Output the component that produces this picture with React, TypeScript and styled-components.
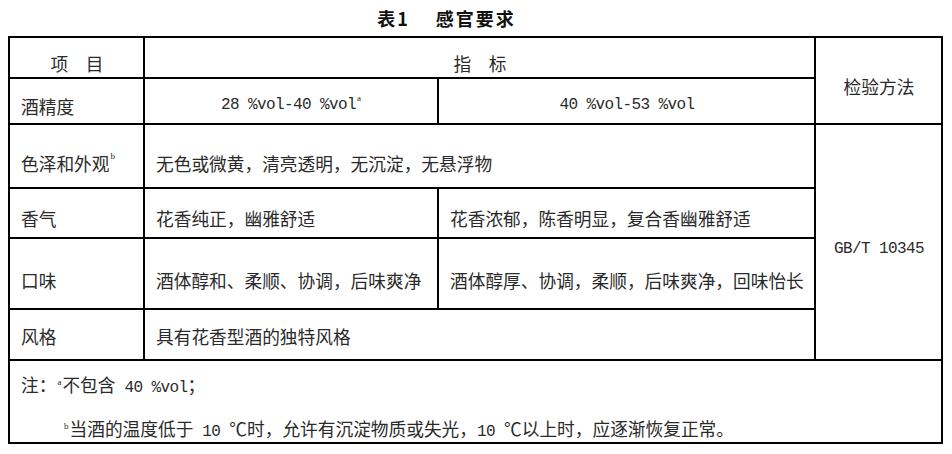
import React from "react";
import styled, { createGlobalStyle } from "styled-components";

const GlobalStyle = createGlobalStyle`
  html, body {
    margin: 0;
    padding: 0;
    background: #ffffff;
  }
  body {
    font-family: "Noto Sans CJK SC", sans-serif;
    color: #2a2a2a;
  }
`;

const Page = styled.div`
  width: 952px;
  padding: 0 8px;
  box-sizing: border-box;
`;

const Title = styled.h1`
  display: flex;
  justify-content: center;
  gap: 26px;
  height: 36px;
  margin: 0;
  padding-right: 59px;
  line-height: 36px;
  font-size: 18px;
  font-weight: 700;
  letter-spacing: 2px;
  color: #111;
`;

// grid lines are drawn by the black background showing through the gaps
const Grid = styled.div`
  display: grid;
  width: 935px;
  box-sizing: border-box;
  padding: 2px;
  gap: 2px;
  background: #000;
  grid-template-columns: 133px 292px 375px 125px;
  grid-template-rows: 39px 44px 62px 48px 69px 49px 81px;
`;

const Cell = styled.div<{ $col?: string; $row?: string; $center?: boolean; $shift?: number }>`
  display: flex;
  align-items: center;
  justify-content: ${({ $center }) => ($center ? "center" : "flex-start")};
  grid-column: ${({ $col }) => $col || "auto"};
  grid-row: ${({ $row }) => $row || "auto"};
  background: #fff;
  box-sizing: border-box;
  padding: ${({ $shift = 10 }) => $shift}px 10px 0 11px;
  font-size: 17.7px;
  white-space: nowrap;
`;

const Note = styled.div`
  grid-column: 1 / 5;
  background: #fff;
  overflow: hidden;
  padding: 1px 11px 0;
  font-size: 17.7px;
  line-height: 44px;
  white-space: nowrap;
`;

const NoteLine = styled.div<{ $indent?: boolean }>`
  height: 44px;
  padding-left: ${({ $indent }) => ($indent ? "42px" : "0")};
`;

const L = styled.span`
  font-family: "Liberation Mono", monospace;
  font-size: 16px;
  letter-spacing: -0.6px;
  line-height: 1;
  white-space: pre;
`;

const Sup = styled.span`
  font-family: "Liberation Serif", serif;
  font-size: 9px;
  line-height: 1;
  position: relative;
  top: -7px;
  margin: 0 1px;
`;

export default function App() {
  return (
    <Page>
      <GlobalStyle />
      <Title>
        <span>表1</span>
        <span>感官要求</span>
      </Title>
      <Grid>
        <Cell $center>项　目</Cell>
        <Cell $col="2 / 4" $center>指　标</Cell>
        <Cell $col="4" $row="1 / 3" $center $shift={11}>检验方法</Cell>

        <Cell>酒精度</Cell>
        <Cell $center $shift={8}>
          <L>28 %vol-40 %vol</L>
          <Sup>a</Sup>
        </Cell>
        <Cell $center $shift={8}>
          <L>40 %vol-53 %vol</L>
        </Cell>

        <Cell $shift={14}>
          色泽和外观<Sup>b</Sup>
        </Cell>
        <Cell $col="2 / 4" $shift={14}>无色或微黄，清亮透明，无沉淀，无悬浮物</Cell>
        <Cell $col="4" $row="3 / 7" $center $shift={14}>
          <L>GB/T 10345</L>
        </Cell>

        <Cell>香气</Cell>
        <Cell>花香纯正，幽雅舒适</Cell>
        <Cell>花香浓郁，陈香明显，复合香幽雅舒适</Cell>

        <Cell $shift={12}>口味</Cell>
        <Cell $shift={12}>酒体醇和、柔顺、协调，后味爽净</Cell>
        <Cell $shift={12}>酒体醇厚、协调，柔顺，后味爽净，回味怡长</Cell>

        <Cell $shift={2}>风格</Cell>
        <Cell $col="2 / 4" $shift={2}>具有花香型酒的独特风格</Cell>

        <Note>
          <NoteLine>
            注：<Sup>a</Sup>不包含<L> 40 %vol</L>；
          </NoteLine>
          <NoteLine $indent>
            <Sup>b</Sup>当酒的温度低于<L> 10 </L>℃时，允许有沉淀物质或失光，<L>10 </L>℃以上时，应逐渐恢复正常。
          </NoteLine>
        </Note>
      </Grid>
    </Page>
  );
}
